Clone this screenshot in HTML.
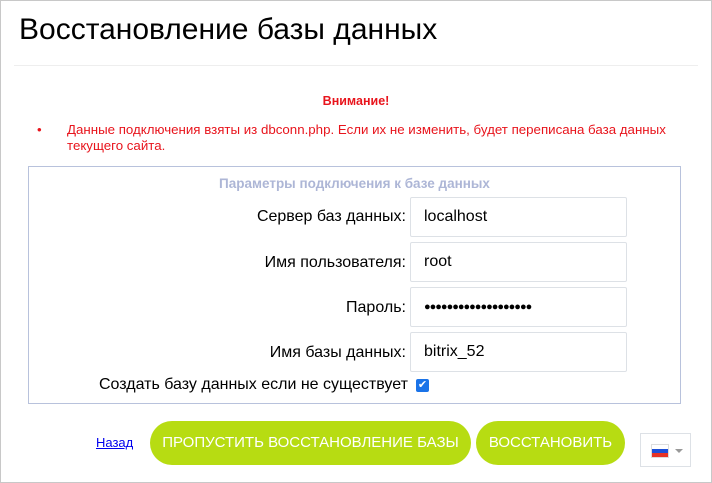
<!DOCTYPE html><html><head><meta charset="utf-8"><style>
body{margin:0;width:712px;height:483px;font-family:"Liberation Sans",sans-serif;background:#fff;position:relative;overflow:hidden}
.frame{position:absolute;left:0;top:0;width:710px;height:481px;border:1px solid #c8c8c8}
.a{position:absolute;white-space:nowrap}
.lbl{position:absolute;right:306px;font-size:16px;color:#000}
.inp{position:absolute;left:410px;font-size:16px;line-height:38px;padding-left:13px;box-sizing:border-box;width:217px;height:40px;border:1px solid #dde1e6;border-radius:2px}
.btn{position:absolute;top:421px;height:44px;background:#b7dc12;border-radius:22px;color:#fff;font-size:15px;line-height:44px;text-align:center}
</style></head><body><div class="frame"></div>
<div class="a" style="left:19px;top:13px;font-size:30px;color:#000">Восстановление базы данных</div>
<div class="a" style="left:14px;top:65px;width:684px;height:1px;background:#eee"></div>
<div class="a" style="left:0;width:712px;text-align:center;top:94px;font-size:12.5px;font-weight:bold;color:#e8141c">Внимание!</div>
<div class="a" style="left:37px;top:122px;font-size:13.3px;color:#e8141c;line-height:16px">•</div>
<div class="a" style="left:67px;top:122px;font-size:13.3px;color:#e8141c;line-height:16px">Данные подключения взяты из dbconn.php. Если их не изменить, будет переписана база данных<br>текущего сайта.</div>
<div class="a" style="left:28px;top:166px;width:651px;height:236px;border:1px solid #b8c2dc"></div>
<div class="a" style="left:28px;width:653px;text-align:center;top:176px;font-size:13.5px;font-weight:bold;color:#adb6d6">Параметры подключения к базе данных</div>
<div class="lbl" style="top:208px">Сервер баз данных:</div><div class="inp" style="top:197px">localhost</div>
<div class="lbl" style="top:254px">Имя пользователя:</div><div class="inp" style="top:242px">root</div>
<div class="lbl" style="top:299px">Пароль:</div><div class="inp" style="top:287px;font-size:11px;letter-spacing:-1px">●●●●●●●●●●●●●●●●●●●</div>
<div class="lbl" style="top:344px">Имя базы данных:</div><div class="inp" style="top:332px">bitrix_52</div>
<div class="a" style="left:99px;top:376px;font-size:16px">Создать базу данных если не существует</div>
<div class="a" style="left:416px;top:379px;width:13px;height:13px;background:#1a73e8;border-radius:2px;color:#fff;font-size:11px;line-height:13px;text-align:center">✔</div>
<div class="a" style="left:96px;top:435px;font-size:13px;color:#00e;text-decoration:underline">Назад</div>
<div class="btn" style="left:150px;width:321px">ПРОПУСТИТЬ ВОССТАНОВЛЕНИЕ БАЗЫ</div>
<div class="btn" style="left:476px;width:149px">ВОССТАНОВИТЬ</div>
<div class="a" style="left:640px;top:433px;width:51px;height:34px;border:1px solid #dde1e6;box-sizing:border-box"></div>
<div class="a" style="left:652px;top:445px;width:16px;height:12px;background:linear-gradient(#fff 0 33%,#1c4fd8 33% 66%,#e53226 66%);box-shadow:0 0 0 1px #ddd"></div>
<div class="a" style="left:675px;top:449px;width:0;height:0;border-left:4px solid transparent;border-right:4px solid transparent;border-top:4px solid #999"></div>
</body></html>
